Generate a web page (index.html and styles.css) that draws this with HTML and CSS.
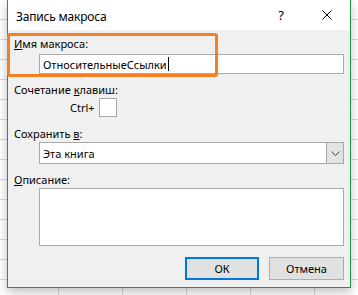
FILE: index.html
```html
<!DOCTYPE html>
<html lang="ru">
<head>
    <meta charset="UTF-8">
    <title>Запись макроса</title>
    <link rel="stylesheet" href="styles.css">
</head>
<body>
    <!-- Record macro dialog over the worksheet -->
    <div class="dialog">
        <div class="titlebar">
            <span class="title">Запись макроса</span>
            <span class="title-btn">?</span>
            <span class="title-btn">
                <svg width="10" height="10" viewBox="0 0 10 10"><path d="M0.5 0.5 L9.5 9.5 M9.5 0.5 L0.5 9.5" stroke="#000" stroke-width="1" fill="none"/></svg>
            </span>
        </div>

        <div class="content">
            <div class="field-label"><u>И</u>мя макроса:</div>
            <div class="textbox">ОтносительныеСсылки<span class="caret"></span></div>

            <div class="field-label label-gap">Сочетание <u>к</u>лавиш:</div>
            <div class="shortcut">
                <span>Ctrl+</span>
                <span class="keybox"></span>
            </div>

            <div class="field-label label-gap2">Сохранить <u>в</u>:</div>
            <div class="select">
                <span class="select-value">Эта книга</span>
                <span class="select-drop">
                    <svg width="9" height="5" viewBox="0 0 9 5"><path d="M0.5 0.5 L4.5 4.5 L8.5 0.5" stroke="#444" stroke-width="1" fill="none"/></svg>
                </span>
            </div>

            <div class="field-label label-gap3"><u>О</u>писание:</div>
            <div class="textarea"></div>

            <div class="buttons">
                <button class="btn btn-default">ОК</button>
                <button class="btn">Отмена</button>
            </div>
        </div>

        <!-- orange annotation around the macro name -->
        <div class="highlight"></div>
    </div>
</body>
</html>
```

FILE: styles.css
```css
/* Worksheet grid behind the dialog */
body {
    margin: 0;
    height: 295px;
    overflow: hidden;
    font-family: "Noto Sans", "Open Sans", sans-serif;
    font-size: 11px;
    color: #000;
    background-color: #fff;
    background-image:
        repeating-linear-gradient(to bottom, transparent 0 19px, #dadada 19px 20px),
        repeating-linear-gradient(to right, transparent 0 63px, #dadada 63px 64px);
    background-position: 0 0, -5px 0;
}

/* Dialog window */
.dialog {
    position: relative;
    width: 342px;
    margin-left: 7px;
    background-color: #f0f0f0;
    border: 1px solid #1f9447;
    border-top: none;
    box-shadow: 0 4px 10px rgba(0, 0, 0, 0.25);
}

.titlebar {
    display: flex;
    align-items: center;
    height: 30px;
    background-color: #fff;
}

.title {
    flex: 1;
    padding-left: 8px;
    padding-top: 2px;
    font-size: 12px;
    letter-spacing: -0.2px;
}

.title-btn {
    display: flex;
    justify-content: center;
    align-items: center;
    width: 46px;
    height: 30px;
    font-size: 13px;
}

/* Form body */
.content {
    padding: 6px 6px 7px 6px;
}

.field-label {
    line-height: 16px;
}

.label-gap {
    margin-top: 8px;
}

.label-gap2 {
    margin-top: 9px;
}

.label-gap3 {
    margin-top: 8px;
}

.textbox {
    display: flex;
    align-items: center;
    height: 18px;
    margin: 2px 0 0 25px;
    padding-left: 3px;
    background-color: #fff;
    border: 1px solid #a9a9a9;
}

.caret {
    display: inline-block;
    width: 1px;
    height: 14px;
    margin-left: 1px;
    background-color: #000;
}

.shortcut {
    display: flex;
    align-items: center;
    gap: 4px;
    margin-left: 56px;
}

.keybox {
    width: 16px;
    height: 17px;
    background-color: #fff;
    border: 1px solid #a9a9a9;
}

.select {
    display: flex;
    height: 20px;
    margin-left: 25px;
    background-color: #fff;
    border: 1px solid #a9a9a9;
}

.select-value {
    flex: 1;
    display: flex;
    align-items: center;
    padding-left: 3px;
}

.select-drop {
    display: flex;
    justify-content: center;
    align-items: center;
    width: 16px;
    background-color: #e3e3e3;
    border-left: 1px solid #a9a9a9;
}

.textarea {
    height: 56px;
    margin-left: 25px;
    background-color: #fff;
    border: 1px solid #a9a9a9;
}

/* Buttons */
.buttons {
    display: flex;
    justify-content: flex-end;
    gap: 10px;
    margin-top: 11px;
}

.btn {
    width: 75px;
    height: 23px;
    padding: 0;
    font-family: inherit;
    font-size: 11px;
    color: #000;
    background-color: #e1e1e1;
    border: 1px solid #adadad;
}

.btn-default {
    width: 74px;
    border: 2px solid #0078d7;
}

/* Orange annotation frame */
.highlight {
    position: absolute;
    left: -1px;
    top: 33px;
    width: 205px;
    height: 38px;
    border: 3px solid #f47e20;
    border-radius: 3px;
}
```
